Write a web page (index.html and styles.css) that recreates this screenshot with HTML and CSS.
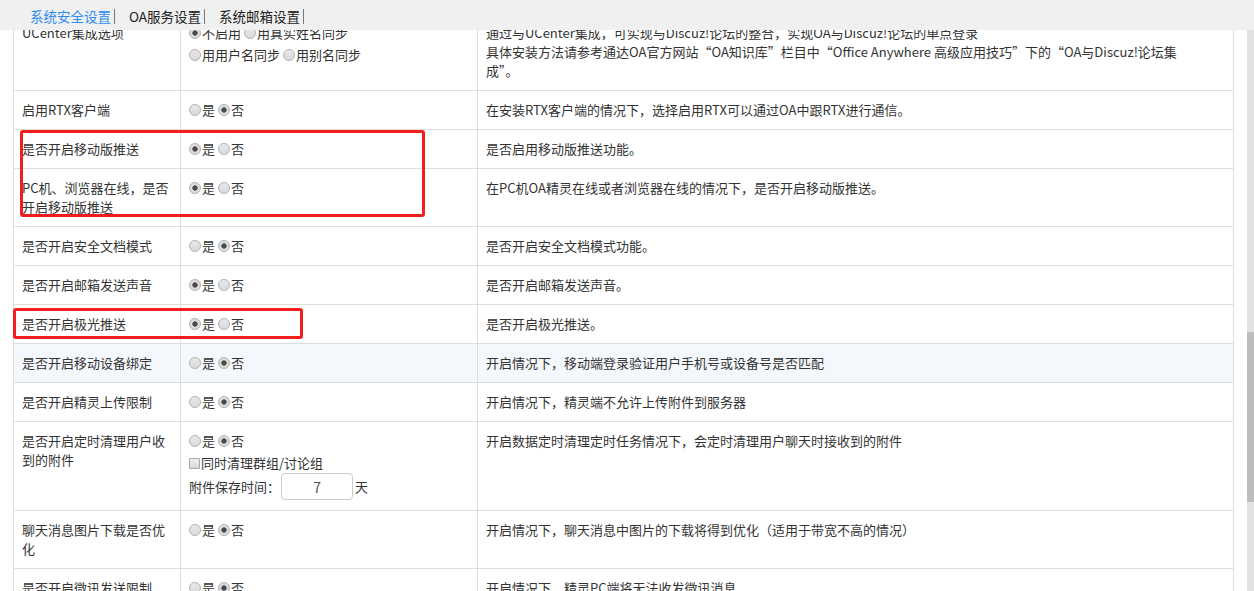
FILE: index.html
```html
<!doctype html>
<html lang="zh-CN">
<head>
    <meta charset="UTF-8">
    <title>系统安全设置</title>
    <link rel="stylesheet" href="styles.css">
</head>
<body>
    <div class="tabs">
        <span class="tab active">系统安全设置</span>
        <span class="tab">OA服务设置</span>
        <span class="tab">系统邮箱设置</span>
    </div>
    <div class="main">
        <div class="content">
            <table class="setting-table">
                <colgroup>
                    <col class="col-name">
                    <col class="col-value">
                    <col>
                </colgroup>
                <tr>
                    <td>UCenter集成选项</td>
                    <td>
                        <div class="opt-line"><label><input type="radio" name="uc" checked>不启用</label> <label><input type="radio" name="uc">用真实姓名同步</label></div>
                        <div class="opt-line second"><label><input type="radio" name="uc">用用户名同步</label> <label><input type="radio" name="uc">用别名同步</label></div>
                    </td>
                    <td>通过与UCenter集成，可实现与Discuz!论坛的整合，实现OA与Discuz!论坛的单点登录<br>具体安装方法请参考通达OA官方网站“OA知识库”栏目中“Office Anywhere 高级应用技巧”下的“OA与Discuz!论坛集<br>成”。</td>
                </tr>
                <tr>
                    <td>启用RTX客户端</td>
                    <td><label><input type="radio" name="rtx">是</label> <label><input type="radio" name="rtx" checked>否</label></td>
                    <td>在安装RTX客户端的情况下，选择启用RTX可以通过OA中跟RTX进行通信。</td>
                </tr>
                <tr>
                    <td>是否开启移动版推送</td>
                    <td><label><input type="radio" name="push" checked>是</label> <label><input type="radio" name="push">否</label></td>
                    <td>是否启用移动版推送功能。</td>
                </tr>
                <tr>
                    <td>PC机、浏览器在线，是否开启移动版推送</td>
                    <td><label><input type="radio" name="pcpush" checked>是</label> <label><input type="radio" name="pcpush">否</label></td>
                    <td>在PC机OA精灵在线或者浏览器在线的情况下，是否开启移动版推送。</td>
                </tr>
                <tr>
                    <td>是否开启安全文档模式</td>
                    <td><label><input type="radio" name="doc">是</label> <label><input type="radio" name="doc" checked>否</label></td>
                    <td>是否开启安全文档模式功能。</td>
                </tr>
                <tr>
                    <td>是否开启邮箱发送声音</td>
                    <td><label><input type="radio" name="sound" checked>是</label> <label><input type="radio" name="sound">否</label></td>
                    <td>是否开启邮箱发送声音。</td>
                </tr>
                <tr>
                    <td>是否开启极光推送</td>
                    <td><label><input type="radio" name="jpush" checked>是</label> <label><input type="radio" name="jpush">否</label></td>
                    <td>是否开启极光推送。</td>
                </tr>
                <tr class="hover">
                    <td>是否开启移动设备绑定</td>
                    <td><label><input type="radio" name="bind">是</label> <label><input type="radio" name="bind" checked>否</label></td>
                    <td>开启情况下，移动端登录验证用户手机号或设备号是否匹配</td>
                </tr>
                <tr>
                    <td>是否开启精灵上传限制</td>
                    <td><label><input type="radio" name="upload">是</label> <label><input type="radio" name="upload" checked>否</label></td>
                    <td>开启情况下，精灵端不允许上传附件到服务器</td>
                </tr>
                <tr>
                    <td>是否开启定时清理用户收到的附件</td>
                    <td>
                        <label><input type="radio" name="clean">是</label> <label><input type="radio" name="clean" checked>否</label>
                        <div class="check-line"><label><input type="checkbox">同时清理群组/讨论组</label></div>
                        <div class="keep-line">附件保存时间：<input class="days" type="text" value="7">天</div>
                    </td>
                    <td>开启数据定时清理定时任务情况下，会定时清理用户聊天时接收到的附件</td>
                </tr>
                <tr>
                    <td>聊天消息图片下载是否优化</td>
                    <td><label><input type="radio" name="img">是</label> <label><input type="radio" name="img" checked>否</label></td>
                    <td>开启情况下，聊天消息中图片的下载将得到优化（适用于带宽不高的情况）</td>
                </tr>
                <tr>
                    <td>是否开启微讯发送限制</td>
                    <td><label><input type="radio" name="wx">是</label> <label><input type="radio" name="wx" checked>否</label></td>
                    <td>开启情况下，精灵PC端将无法收发微讯消息</td>
                </tr>
            </table>
        </div>
        <div class="scrollbar"><div class="thumb"></div></div>
    </div>

    <!-- 标注框 -->
    <div class="mark mark-push"></div>
    <div class="mark mark-jpush"></div>
</body>
</html>
```

FILE: styles.css
```css
* {
    box-sizing: border-box;
}

html, body {
    height: 100%;
}

body {
    position: relative;
    margin: 0;
    overflow: hidden;

    font-family: "Noto Sans CJK SC", "Noto Sans", sans-serif;
    font-size: 13px;
    color: #333;
    background: #fff;
}

/* 顶部页签 */
.tabs {
    position: relative;
    z-index: 2;
    height: 30px;
    padding-left: 19px;
    background: #f0f0f0;
    line-height: 30px;
}

.tab {
    display: inline-block;
    margin-left: 11px;
    padding-right: 3px;
    border-right: 1px solid #777;

    font-size: 13.5px;
    line-height: 15px;
    vertical-align: middle;
    color: #222;
}

.tab.active {
    color: #2d8cf0;
}

.main {
    display: flex;
    height: 561px;
}

.content {
    flex: 1;
    padding: 0 13px;
    overflow: hidden;
}

.scrollbar {
    width: 7px;
    background: #e2e2e2;
}

.thumb {
    height: 170px;
    margin-top: 302px;
    background: #bcbcbc;
}

/* 设置表格 */
.setting-table {
    width: 100%;
    margin-top: -17px;
    border-collapse: collapse;
    table-layout: fixed;
}

.col-name {
    width: 167px;
}

.col-value {
    width: 297px;
}

.setting-table td {
    padding: 9px 8px 10px;
    border: 1px solid #ddd;

    line-height: 19px;
    vertical-align: top;
}

.setting-table tr.hover td {
    background: #f4f8fd;
}

label {
    white-space: nowrap;
}

.opt-line.second {
    margin-top: 3px;
}

input[type=radio] {
    -webkit-appearance: none;
    appearance: none;

    width: 12px;
    height: 12px;
    margin: 0 1px 0 0;
    border: 1px solid #b3b3b3;
    border-radius: 50%;

    background: linear-gradient(#e9e9e9, #d9d9d9);
    vertical-align: -1px;
}

input[type=radio]:checked {
    background: radial-gradient(circle, #4a4a4a 0, #4a4a4a 2.3px, #dcdcdc 3px);
}

input[type=checkbox] {
    -webkit-appearance: none;
    appearance: none;

    width: 11px;
    height: 11px;
    margin: 0 1px 0 0;
    border: 1px solid #a8a8a8;
    border-radius: 1px;

    background: linear-gradient(#eee, #d8d8d8);
    vertical-align: -1px;
}

.check-line {
    margin-top: 3px;
}

.keep-line {
    margin-top: 1px;
    line-height: 27px;
}

.days {
    width: 72px;
    height: 27px;
    margin: 0 2px 0 1px;
    padding: 0 4px;
    border: 1px solid #ccc;
    border-radius: 4px;

    font-family: inherit;
    font-size: 14px;
    text-align: center;
    color: #555;
    vertical-align: top;
}

/* 红色标注框 */
.mark {
    position: absolute;
    z-index: 3;
    border: 3px solid #f21d1d;
    border-radius: 3px;
}

.mark-push {
    left: 20px;
    top: 130px;
    width: 405px;
    height: 87px;
}

.mark-jpush {
    left: 13px;
    top: 308px;
    width: 290px;
    height: 31px;
}
```
